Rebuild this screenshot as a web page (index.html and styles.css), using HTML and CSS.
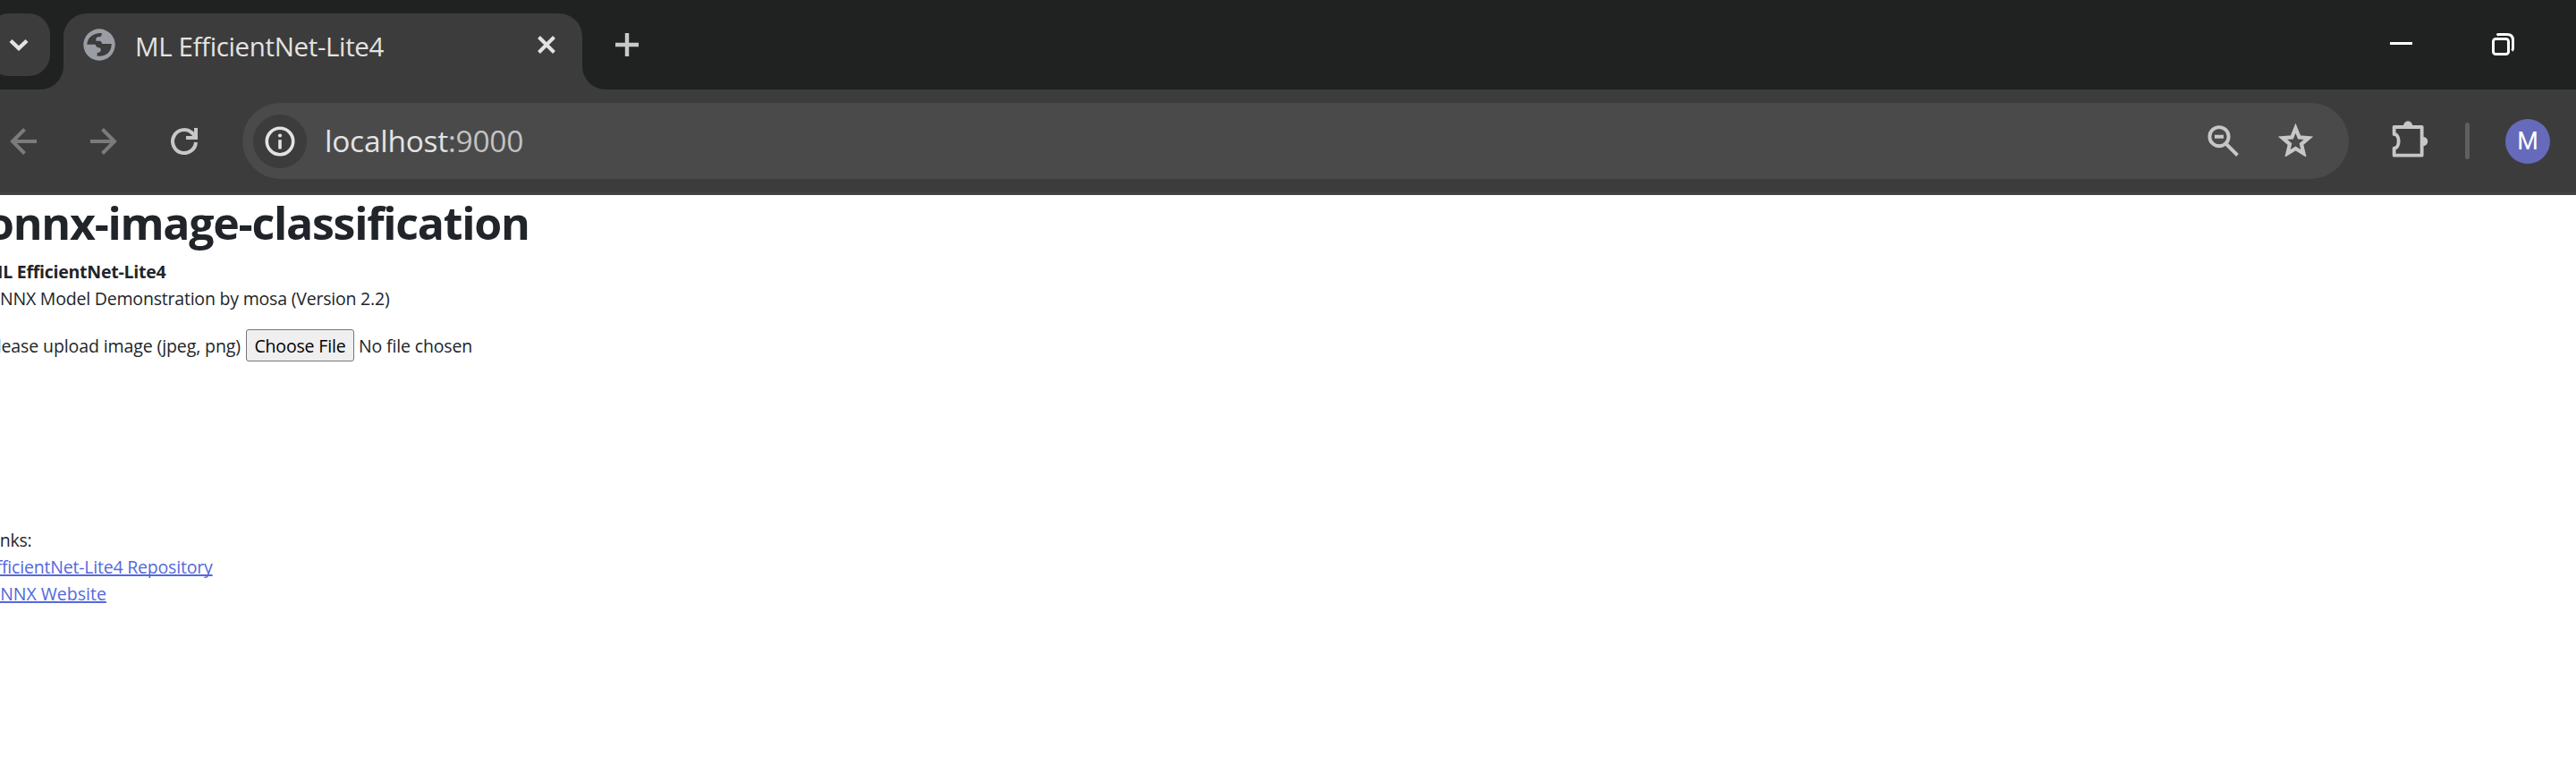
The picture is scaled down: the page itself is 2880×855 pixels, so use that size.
FILE: index.html
```html
<!DOCTYPE html>
<html lang="en">
<head>
<meta charset="utf-8">
<title>ML EfficientNet-Lite4</title>
<link rel="stylesheet" href="styles.css">
</head>
<body>
<header class="tabstrip">
  <button class="tab-search" aria-label="Search tabs">
    <svg width="22" height="14" viewBox="0 0 22 14"><path d="M2 2.5L11 11L20 2.5" fill="none" stroke="#e3e3e3" stroke-width="4.4"/></svg>
  </button>
  <div class="tab">
    <svg class="favicon" width="36" height="36" viewBox="24 21 108 108">
      <circle cx="78" cy="75" r="53" fill="#9a9ea4"/>
      <path d="M37 74C38 52 56 35 86 36V42Q85 49 74 49Q67 50 67 56V62H78Q87 63 87 72H119C120 98 100 117 71 113V101H77Q83 100 83 94V90Q83 85 77 85Q67 84 65 74Z" fill="#3c3c3c"/>
    </svg>
    <span class="tab-title">ML EfficientNet-Lite4</span>
    <svg class="tab-close" width="20" height="20" viewBox="0 0 20 20"><path d="M1.5 1.5L18.5 18.5M18.5 1.5L1.5 18.5" stroke="#e3e3e3" stroke-width="4"/></svg>
  </div>
  <svg class="new-tab" width="26" height="26" viewBox="0 0 26 26"><path d="M13 0V26M0 13H26" stroke="#c9c9c9" stroke-width="4.4"/></svg>
  <div class="window-controls">
    <svg width="25" height="25" viewBox="0 0 25 25"><path d="M0 11.5H25" stroke="#fff" stroke-width="3"/></svg>
    <svg width="25" height="25" viewBox="0 0 25 25" fill="none" stroke="#fff" stroke-width="3"><rect x="1.5" y="6.5" width="17" height="17" rx="2.8"/><path d="M5.5 2.2Q6.5 1.5 8 1.5H17Q23.5 1.5 23.5 8V17Q23.5 18.5 22.3 19.5"/></svg>
  </div>
</header>

<nav class="toolbar">
  <div class="nav-buttons">
    <svg width="30" height="30" viewBox="0 0 30 30" fill="none" stroke="#7b7b7b" stroke-width="4"><path d="M30 15H3M16.500 1.500L3 15L16.500 28.500"/></svg>
    <svg width="30" height="30" viewBox="0 0 30 30" fill="none" stroke="#7b7b7b" stroke-width="4"><path d="M0 15H27M13.500 1.500L27 15L13.500 28.500"/></svg>
    <svg width="30" height="30" viewBox="0 0 30 30" fill="none" stroke="#c7c7c7" stroke-width="4"><path d="M28 16A13 13 0 1 1 23 4.800L28 10"/><path d="M28 0V11H17"/></svg>
  </div>
  <div class="omnibox">
    <span class="site-info">
      <svg width="34" height="34" viewBox="0 0 34 34"><circle cx="17" cy="17" r="14.700" fill="none" stroke="#e3e3e3" stroke-width="3.600"/><path d="M17 15.200V25.500" stroke="#e3e3e3" stroke-width="3.600"/><circle cx="17" cy="10.500" r="2.100" fill="#e3e3e3"/></svg>
    </span>
    <span class="url">localhost<span class="port">:9000</span></span>
    <svg class="zoom-icon" width="36" height="35" viewBox="0 0 36 35" fill="none" stroke="#c7c7c7" stroke-width="3.900"><circle cx="13" cy="12.700" r="10.600"/><path d="M8 12.700H18M20.500 20.500L33.500 33.500"/></svg>
    <svg class="star-icon" width="39" height="37" viewBox="0 0 39 37"><path fill="none" stroke="#c7c7c7" stroke-width="4.200" d="M19.500 5.200L23.600 15.400L34 16.200L26 23.100L28.500 33.500L19.500 28L10.500 33.500L13 23.100L5 16.200L15.400 15.400Z"/></svg>
  </div>
  <svg class="puzzle" width="42" height="41" viewBox="42 30 126 123">
    <path d="M50 51H143V146H50V122C70 122 70 75 50 75Z" fill="none" stroke="#c7c7c7" stroke-width="11.500" stroke-linejoin="round"/>
    <path d="M81 48A15.500 17 0 0 1 112 48ZM146 83A17 16 0 0 1 146 115Z" fill="#c7c7c7"/>
  </svg>
  <span class="divider"></span>
  <span class="avatar">M</span>
</nav>

<main class="page">
  <h1 class="heading">onnx-image-classification</h1>
  <div class="model">ML EfficientNet-Lite4</div>
  <div class="summary">ONNX Model Demonstration by mosa (Version 2.2)</div>
  <form class="upload">
    <label class="upload-label">Please upload image (jpeg, png)</label>
    <button class="choose" type="button">Choose File</button>
    <span class="chosen">No file chosen</span>
  </form>
  <section class="links">
    <div class="links-title">Links:</div>
    <div><a class="link" href="#">EfficientNet-Lite4 Repository</a></div>
    <div><a class="link link-onnx" href="#">ONNX Website</a></div>
  </section>
</main>
</body>
</html>
```
FILE: styles.css
```css
* { box-sizing: border-box; }
body {
  margin: 0;
  height: 855px;
  overflow: hidden;
  background: #fff;
  color: #212529;
  font-family: "Open Sans", "Noto Sans", sans-serif;
}
svg { display: block; flex: none; }
button { font-family: inherit; }

.tabstrip {
  display: flex;
  height: 100px;
  padding-top: 15px;
  background: #202221;
}
.tab-search {
  display: flex;
  align-items: center;
  width: 70px;
  height: 70px;
  margin-left: -14px;
  padding: 0 0 0 24px;
  border: 0;
  border-radius: 24px;
  background: #3c3c3c;
}
.tab {
  position: relative;
  display: flex;
  align-items: center;
  width: 580px;
  height: 85px;
  margin-left: 15px;
  padding: 0 30px 15px 22px;
  border-radius: 26px 26px 0 0;
  background: #3c3c3c;
}
/* outward curves at the foot of the active tab */
.tab::before,
.tab::after {
  content: "";
  position: absolute;
  bottom: 0;
  width: 26px;
  height: 26px;
}
.tab::before {
  left: -26px;
  background: radial-gradient(circle at 0 0, transparent 25.5px, #3c3c3c 26.5px);
}
.tab::after {
  right: -26px;
  background: radial-gradient(circle at 100% 0, transparent 25.5px, #3c3c3c 26.5px);
}
.tab-title {
  flex: 1;
  padding: 3px 0 0 22px;
  color: #e3e3e3;
  font-size: 29.5px;
  letter-spacing: -0.36px;
  white-space: nowrap;
}
.new-tab { margin: 22px 0 0 37px; }
.window-controls {
  display: flex;
  gap: 89px;
  margin: 22px 69px 0 auto;
}

.toolbar {
  display: flex;
  align-items: center;
  height: 118px;
  padding: 0 29px 0 11px;
  background: #3c3c3c;
  border-bottom: 3px solid #444244;
}
.nav-buttons { display: flex; gap: 60px; }
.omnibox {
  display: flex;
  align-items: center;
  width: 2355px;
  height: 85px;
  margin-left: 50px;
  padding: 0 40px 0 12px;
  border-radius: 43px;
  background: #4a4a4a;
}
.site-info {
  display: flex;
  align-items: center;
  justify-content: center;
  width: 60px;
  height: 60px;
  border-radius: 50%;
  background: #3c3c3c;
}
.url {
  flex: 1;
  padding: 0 0 2px 20px;
  color: #e3e3e3;
  font-size: 33.5px;
  letter-spacing: -0.26px;
}
.port { color: #c2c2c2; }
.zoom-icon { margin-right: 43px; }
.star-icon { margin-bottom: 2px; }
.puzzle { margin: 0 0 4px 48px; }
.divider {
  width: 5px;
  height: 41px;
  margin-left: 40px;
  border-radius: 3px;
  background: #606060;
}
.avatar {
  display: flex;
  align-items: center;
  justify-content: center;
  width: 50px;
  height: 50px;
  margin-left: 40px;
  border-radius: 50%;
  background: #666abb;
  color: #fff;
  font: 400 27px Roboto, sans-serif;
}

.page {
  margin-left: -15px;
  padding-top: 1px;
  font-size: 19.5px;
  line-height: 30px;
  letter-spacing: -0.2px;
  white-space: nowrap;
}
.heading {
  margin: 0 0 10px;
  font-size: 50px;
  font-weight: 700;
  line-height: 60px;
  letter-spacing: -1.24px;
}
.model { font-weight: 700; letter-spacing: -0.24px; }
.upload {
  display: flex;
  align-items: center;
  height: 36px;
  margin: 19px 0 185px;
}
.upload-label { width: 290px; padding-top: 2px; letter-spacing: -0.1px; }
.choose {
  width: 121px;
  height: 36px;
  padding: 1px 0 0;
  border: 1px solid #767676;
  border-radius: 3px;
  background: #efefef;
  color: #000;
  font-size: 19.5px;
  letter-spacing: -0.15px;
}
.chosen { margin-left: 5px; padding-top: 2px; letter-spacing: -0.15px; }
.link {
  color: #5468dc;
  text-decoration: underline;
  text-decoration-thickness: 2px;
  text-underline-offset: 1px;
  text-decoration-skip-ink: none;
}
.link-onnx { letter-spacing: 0; }
```
